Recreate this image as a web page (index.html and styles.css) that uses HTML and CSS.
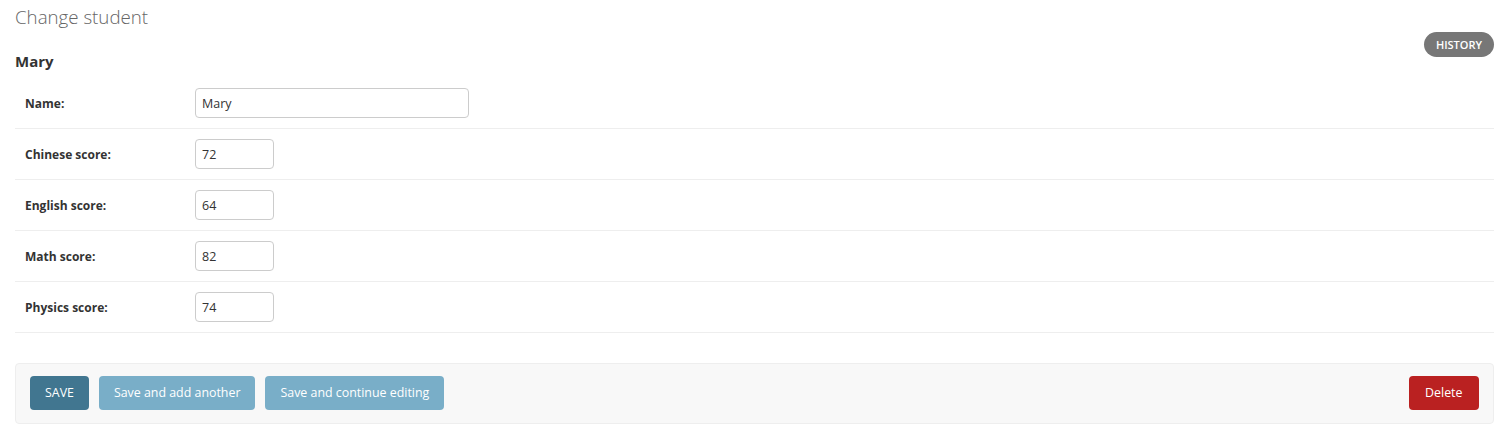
FILE: index.html
```html
<!DOCTYPE html>
<html lang="en">
<head>
<meta charset="utf-8">
<title>Change student</title>
<link rel="stylesheet" href="styles.css">
</head>
<body>
<div class="content">
  <h1 class="page-title">Change student</h1>
  <form class="change-form">
    <div class="module-head">
      <h2 class="object-name">Mary</h2>
      <a class="history-link" href="#">History</a>
    </div>
    <div class="form-row">
      <label class="field-label" for="id_name">Name:</label>
      <input class="field-input wide" id="id_name" type="text" value="Mary">
    </div>
    <div class="form-row">
      <label class="field-label" for="id_chinese">Chinese score:</label>
      <input class="field-input narrow" id="id_chinese" type="text" value="72">
    </div>
    <div class="form-row">
      <label class="field-label" for="id_english">English score:</label>
      <input class="field-input narrow" id="id_english" type="text" value="64">
    </div>
    <div class="form-row">
      <label class="field-label" for="id_math">Math score:</label>
      <input class="field-input narrow" id="id_math" type="text" value="82">
    </div>
    <div class="form-row">
      <label class="field-label" for="id_physics">Physics score:</label>
      <input class="field-input narrow" id="id_physics" type="text" value="74">
    </div>
    <div class="submit-row">
      <button class="btn btn-default" type="button">Save</button>
      <button class="btn btn-secondary" type="button">Save and add another</button>
      <button class="btn btn-secondary" type="button">Save and continue editing</button>
      <span class="spacer"></span>
      <a class="btn btn-delete" href="#">Delete</a>
    </div>
  </form>
</div>
</body>
</html>
```

FILE: styles.css
```css
html, body {
  margin: 0;
  padding: 0;
  background: #fff;
}

body {
  font-family: "Open Sans", "Noto Sans", "Liberation Sans", sans-serif;
  color: #333;
  font-size: 13px;
}

.content {
  padding: 5px 5px 0 15px;
}

.page-title {
  margin: 0;
  font-size: 18.7px;
  line-height: 24px;
  font-weight: 300;
  color: #666;
}

.change-form {
  margin: 3px 0 0 0;
}

.module-head {
  display: flex;
  justify-content: space-between;
  align-items: flex-start;
  padding-bottom: 7px;
}

.object-name {
  margin: 0;
  padding-top: 19px;
  font-size: 15px;
  line-height: 20px;
  font-weight: 700;
  color: #333;
}

.history-link {
  display: inline-block;
  height: 25px;
  line-height: 25px;
  padding: 0 12px;
  border-radius: 15px;
  background: #777;
  color: #fff;
  font-size: 11px;
  font-weight: 600;
  text-transform: uppercase;
  text-decoration: none;
}

.form-row {
  display: flex;
  align-items: center;
  padding: 10px;
  border-bottom: 1px solid #eee;
}

.field-label {
  width: 170px;
  flex: none;
  font-weight: 700;
  font-size: 12px;
  color: #333;
}

.field-input {
  box-sizing: border-box;
  height: 30px;
  padding: 5px 6px;
  border: 1px solid #ccc;
  border-radius: 4px;
  font-family: inherit;
  font-size: 12.5px;
  color: #333;
  background: #fff;
}

.field-input.wide {
  width: 274px;
}

.field-input.narrow {
  width: 79px;
}

.submit-row {
  display: flex;
  align-items: center;
  gap: 10px;
  margin-top: 30px;
  padding: 12px 14px 13px;
  background: #f8f8f8;
  border: 1px solid #eee;
  border-radius: 4px;
}

.spacer {
  flex: 1;
}

.btn {
  box-sizing: border-box;
  height: 34px;
  padding: 0 15px;
  border: none;
  border-radius: 4px;
  font-family: inherit;
  font-size: 12.4px;
  line-height: 34px;
  color: #fff;
  text-decoration: none;
  cursor: pointer;
}

.btn-default {
  background: #417690;
  text-transform: uppercase;
}

.btn-secondary {
  background: #79aec8;
}

.btn-delete {
  display: inline-block;
  padding: 0 16.5px;
  background: #ba2121;
}
```
